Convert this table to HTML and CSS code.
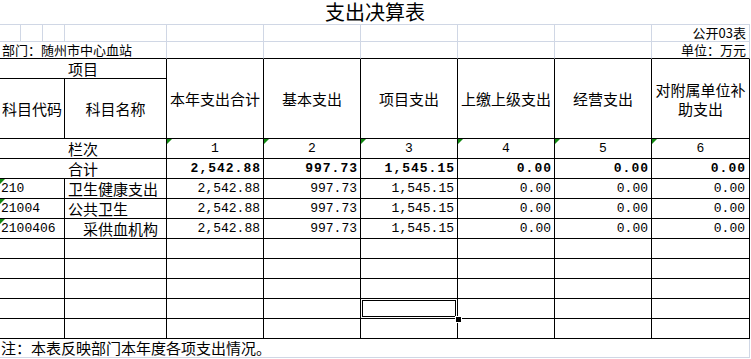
FILE: index.html
```html
<!DOCTYPE html>
<html lang="zh-CN">
<head>
<meta charset="utf-8">
<title>支出决算表</title>
<link rel="stylesheet" href="styles.css">
</head>
<body>
<div class="sheet">
  <div class="c g title span10">支出决算表</div>

  <div class="c g"></div><div class="c g"></div><div class="c g"></div><div class="c g"></div>
  <div class="c g"></div><div class="c g"></div><div class="c g"></div><div class="c g"></div><div class="c g"></div>
  <div class="c g small right">公开03表</div>

  <div class="c g top span4 small dept">部门：随州市中心血站</div>
  <div class="c g top"></div><div class="c g top"></div><div class="c g top"></div><div class="c g top"></div><div class="c g top"></div>
  <div class="c g top small right">单位：万元</div>

  <div class="c b h span4">项目</div>
  <div class="c b h tall">本年支出合计</div>
  <div class="c b h tall">基本支出</div>
  <div class="c b h tall">项目支出</div>
  <div class="c b h tall">上缴上级支出</div>
  <div class="c b h tall">经营支出</div>
  <div class="c b h tall">对附属单位补助支出</div>
  <div class="c b h span3">科目代码</div>
  <div class="c b h">科目名称</div>

  <div class="c b span4 cen txt">栏次</div>
  <div class="c b cen num tri">1</div>
  <div class="c b cen num tri">2</div>
  <div class="c b cen num tri">3</div>
  <div class="c b cen num tri">4</div>
  <div class="c b cen num tri">5</div>
  <div class="c b cen num tri">6</div>

  <div class="c b span4 cen txt">合计</div>
  <div class="c b num r bold">2,542.88</div>
  <div class="c b num r bold">997.73</div>
  <div class="c b num r bold">1,545.15</div>
  <div class="c b num r bold">0.00</div>
  <div class="c b num r bold">0.00</div>
  <div class="c b num r bold last">0.00</div>

  <div class="c b span3 num code tri">210</div>
  <div class="c b txt name">卫生健康支出</div>
  <div class="c b num r">2,542.88</div>
  <div class="c b num r">997.73</div>
  <div class="c b num r">1,545.15</div>
  <div class="c b num r">0.00</div>
  <div class="c b num r">0.00</div>
  <div class="c b num r last">0.00</div>

  <div class="c b span3 num code tri">21004</div>
  <div class="c b txt name">公共卫生</div>
  <div class="c b num r">2,542.88</div>
  <div class="c b num r">997.73</div>
  <div class="c b num r">1,545.15</div>
  <div class="c b num r">0.00</div>
  <div class="c b num r">0.00</div>
  <div class="c b num r last">0.00</div>

  <div class="c b span3 num code tri">2100406</div>
  <div class="c b txt name sub">采供血机构</div>
  <div class="c b num r">2,542.88</div>
  <div class="c b num r">997.73</div>
  <div class="c b num r">1,545.15</div>
  <div class="c b num r">0.00</div>
  <div class="c b num r">0.00</div>
  <div class="c b num r last">0.00</div>

  <div class="c b span3"></div><div class="c b"></div><div class="c b"></div><div class="c b"></div><div class="c b"></div><div class="c b"></div><div class="c b"></div><div class="c b"></div>
  <div class="c b span3"></div><div class="c b"></div><div class="c b"></div><div class="c b"></div><div class="c b"></div><div class="c b"></div><div class="c b"></div><div class="c b"></div>
  <div class="c b span3"></div><div class="c b"></div><div class="c b"></div><div class="c b"></div><div class="c b"></div><div class="c b"></div><div class="c b"></div><div class="c b"></div>
  <div class="c b span3"></div><div class="c b"></div><div class="c b"></div><div class="c b"></div><div class="c b selected"><span class="sel-box"></span><span class="sel-handle"></span></div><div class="c b"></div><div class="c b"></div><div class="c b"></div>
  <div class="c b span3"></div><div class="c b"></div><div class="c b"></div><div class="c b"></div><div class="c b"></div><div class="c b"></div><div class="c b"></div><div class="c b"></div>

  <div class="c g span10 txt note">注：本表反映部门本年度各项支出情况。</div>
</div>
</body>
</html>
```

FILE: styles.css
```css
html, body {
  margin: 0;
  padding: 0;
  background: #ffffff;
}

body {
  width: 751px;
  height: 359px;
  overflow: hidden;
}

.sheet {
  display: grid;
  grid-template-columns: 21px 22px 22px 102px 97px 97px 97px 97px 97px 98px;
  grid-template-rows: 25px 17px 17px 20px 60px repeat(10, 20px) 19px;
  font-family: "Noto Sans CJK SC", "Noto Sans", sans-serif;
  color: #000000;
}

.c {
  box-sizing: border-box;
  display: flex;
  align-items: center;
  white-space: nowrap;
  overflow: visible;
  position: relative;
  min-width: 0;
}

.g {
  border-right: 1px solid #d0d7e5;
  border-bottom: 1px solid #d0d7e5;
}

.g.top {
  border-bottom: 1px solid #000000;
}

.b {
  border-right: 1px solid #000000;
  border-bottom: 1px solid #000000;
}

.span3 { grid-column: span 3; }
.span4 { grid-column: span 4; }
.span10 { grid-column: span 10; }
.tall { grid-row: span 2; }

.title {
  justify-content: center;
  font-size: 20px;
  line-height: 22px;
  border-right: none;
}

.small {
  font-size: 13px;
  line-height: 14px;
}

.right {
  justify-content: flex-end;
  padding-right: 3px;
}

.dept {
  padding-left: 2px;
}

.h {
  justify-content: center;
  text-align: center;
  font-size: 15px;
  line-height: 19px;
  white-space: normal;
}

.txt {
  font-size: 15px;
  line-height: 18px;
}

.cen {
  justify-content: center;
}

.num {
  font-family: "Liberation Mono", "DejaVu Sans Mono", monospace;
  font-size: 13px;
  line-height: 18px;
}

.r {
  justify-content: flex-end;
  padding-right: 3px;
}

.r.last {
  padding-right: 4px;
}

.bold {
  font-weight: 700;
  letter-spacing: 1px;
  padding-right: 2px;
}

.bold.last {
  padding-right: 3px;
}

.code {
  padding-left: 1px;
}

.name {
  padding-left: 3px;
}

.name.sub {
  padding-left: 18px;
}

.tri::before {
  content: "";
  position: absolute;
  left: 0;
  top: 0;
  width: 0;
  height: 0;
  border-top: 5px solid #118811;
  border-right: 5px solid transparent;
}

.note {
  padding-left: 1px;
}

.sel-box {
  position: absolute;
  left: 1px;
  top: 1px;
  right: 1px;
  bottom: 1px;
  border: 1px solid #000000;
}

.sel-handle {
  position: absolute;
  right: -4px;
  bottom: -4px;
  width: 5px;
  height: 5px;
  background: #000000;
  border: 1px solid #ffffff;
  box-sizing: content-box;
  margin: -1px;
  z-index: 2;
}
```
